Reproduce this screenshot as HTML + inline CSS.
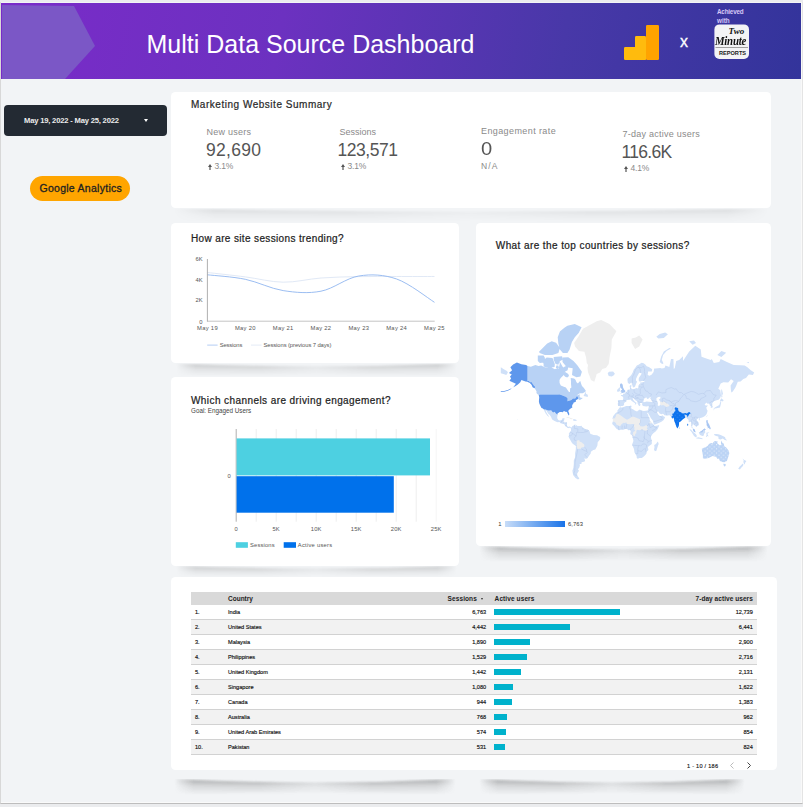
<!DOCTYPE html>
<html><head><meta charset="utf-8">
<style>
*{margin:0;padding:0;box-sizing:border-box}
html,body{width:803px;height:807px;overflow:hidden;background:#ebecee;font-family:"Liberation Sans",sans-serif}
.abs{position:absolute}
#page{position:absolute;left:0;top:2px;width:803px;height:802px;background:#f2f4f6;border-left:1px solid #d8d8d8;border-right:1px solid #e4e4e4;border-bottom:1px solid #bdbdbd;box-shadow:inset 0 -1px 0 #fafafa, inset -1px 0 0 #f9f9f9}
#hdr{position:absolute;left:1px;top:3px;width:800px;height:75.6px;background:linear-gradient(100deg,#7a2bc9 0%,#6c31c0 35%,#4838a8 70%,#33349b 100%);overflow:hidden}
.card{position:absolute;background:#fff;border-radius:4.5px}
.shadow{position:absolute;height:14px;background:linear-gradient(to bottom,rgba(0,0,0,0.10),rgba(0,0,0,0.03) 60%,rgba(0,0,0,0));}
.t{position:absolute;white-space:nowrap;line-height:1}
.lbl{font-size:9px;color:#8a8a8a}
.val{font-size:17.5px;color:#555}
.dlt{font-size:8.5px;color:#8a8a8a;letter-spacing:-0.2px}
.arr{display:inline-block;width:0;height:0;border-left:2px solid transparent;border-right:2px solid transparent;border-bottom:3px solid #555;margin-right:4px;vertical-align:1px}
.ttl{font-size:10px;font-weight:normal;-webkit-text-stroke:0.22px #222;color:#222;letter-spacing:0.15px}
.sm{font-size:5.8px;color:#555}
.sm2{font-size:6.3px;color:#444}
</style></head>
<body>
<div id="page"></div>
<div id="hdr">
  <svg class="abs" style="left:0;top:0" width="800" height="76"><polygon points="1,2 73,3 94,43 64,76 1,76" fill="#7b57c6"/></svg>
  <div class="t" style="left:145.5px;top:29px;font-size:25px;letter-spacing:0;color:#fff">Multi Data Source Dashboard</div>
</div>
<svg class="abs" style="left:0;top:0" width="803" height="80">
  <rect x="624" y="47" width="22" height="13" rx="1.2" fill="#ffbb0d"/>
  <rect x="635" y="36" width="11" height="24" rx="1.2" fill="#ffbb0d"/>
  <rect x="646" y="25" width="13" height="35" rx="1.2" fill="#ffa300"/>
  <rect x="714.4" y="24.4" width="34.6" height="34.6" rx="5" fill="#f3f3f5"/>
  <line x1="715.5" y1="47.5" x2="748" y2="47.5" stroke="#8a8a8a" stroke-width="0.8"/>
</svg>
<div class="t" style="left:680px;top:33.5px;font-size:16px;color:#fff;-webkit-text-stroke:0.3px #fff">x</div>
<div class="t" style="left:717px;top:8.5px;font-size:6.3px;font-weight:bold;color:#d8c8f6;letter-spacing:-0.2px">Achieved</div>
<div class="t" style="left:717px;top:17.5px;font-size:6.3px;font-weight:bold;color:#d8c8f6">with</div>
<div class="t" style="left:728.5px;top:27px;font-size:9px;font-family:'Liberation Serif',serif;font-style:italic;font-weight:bold;color:#111">Two</div>
<div class="t" style="left:715px;top:34px;font-size:13.5px;font-family:'Liberation Serif',serif;font-style:italic;font-weight:bold;color:#111;transform:scaleX(0.8);transform-origin:left top;letter-spacing:-0.3px">Minute</div>
<div class="t" style="left:719px;top:50.6px;font-size:5.6px;font-weight:bold;color:#1a1a1a;letter-spacing:0px">REPORTS</div>

<!-- left controls -->
<div class="abs" style="left:4px;top:105px;width:163px;height:31px;background:#232a33;border-radius:4px"></div>
<div class="t" style="left:24px;top:117px;font-size:7.6px;font-weight:bold;letter-spacing:-0.18px;color:#ececec">May 19, 2022 - May 25, 2022</div>
<div class="abs" style="left:144px;top:119px;width:0;height:0;border-left:2.5px solid transparent;border-right:2.5px solid transparent;border-top:3px solid #fff"></div>
<div class="abs" style="left:30px;top:176px;width:100px;height:25px;background:#ffa500;border-radius:12.5px"></div>
<div class="t" style="left:39.5px;top:183px;font-size:10.5px;font-weight:normal;-webkit-text-stroke:0.3px #222;letter-spacing:0.27px;color:#222">Google Analytics</div>

<!-- cards -->
<!-- shadows -->
<svg class="abs" style="left:0;top:0" width="803" height="807"><defs>
<linearGradient id="sg" x1="0" y1="0" x2="0" y2="1"><stop offset="0" stop-color="#000" stop-opacity="0.2"/><stop offset="0.45" stop-color="#000" stop-opacity="0.07"/><stop offset="1" stop-color="#000" stop-opacity="0"/></linearGradient>
<linearGradient id="sh" x1="0" y1="0" x2="1" y2="0"><stop offset="0" stop-color="#fff" stop-opacity="0"/><stop offset="0.07" stop-color="#fff" stop-opacity="0.9"/><stop offset="0.3" stop-color="#fff" stop-opacity="1"/><stop offset="0.5" stop-color="#fff" stop-opacity="0.45"/><stop offset="0.7" stop-color="#fff" stop-opacity="1"/><stop offset="0.93" stop-color="#fff" stop-opacity="0.9"/><stop offset="1" stop-color="#fff" stop-opacity="0"/></linearGradient>
<mask id="sm" maskContentUnits="objectBoundingBox"><rect x="0" y="0" width="1" height="1" fill="url(#sh)"/></mask>
<filter id="sb" x="-5%" y="-50%" width="110%" height="200%"><feGaussianBlur stdDeviation="1"/></filter>
</defs>
<g mask="url(#sm)" opacity="0.55"><path d="M173.0,208.5 Q471.0,214.8 769.0,208.5 L769.0,222.5 Q471.0,219.0 173.0,222.5 Z" fill="url(#sg)" filter="url(#sb)"/></g>
<g mask="url(#sm)" opacity="1.0"><path d="M176.0,363.5 Q316.5,369.4 457.0,363.5 L457.0,376.5 Q316.5,373.2 176.0,376.5 Z" fill="url(#sg)" filter="url(#sb)"/></g>
<g mask="url(#sm)" opacity="1.0"><path d="M176.0,566.0 Q316.5,571.0 457.0,566.0 L457.0,577.0 Q316.5,574.2 176.0,577.0 Z" fill="url(#sg)" filter="url(#sb)"/></g>
<g mask="url(#sm)" opacity="1.0"><path d="M479.0,546.0 Q623.5,553.2 768.0,546.0 L768.0,562.0 Q623.5,558.0 479.0,562.0 Z" fill="url(#sg)" filter="url(#sb)"/></g>
<g mask="url(#sm)" opacity="1.0"><path d="M174.0,779.0 Q315.0,786.2 456.0,779.0 L456.0,795.0 Q315.0,791.0 174.0,795.0 Z" fill="url(#sg)" filter="url(#sb)"/></g>
<g mask="url(#sm)" opacity="1.0"><path d="M479.0,779.0 Q612.0,786.2 745.0,779.0 L745.0,795.0 Q612.0,791.0 479.0,795.0 Z" fill="url(#sg)" filter="url(#sb)"/></g>
<g mask="url(#sm)" opacity="0.5"><path d="M479.0,546.0 Q623.5,553.2 768.0,546.0 L768.0,562.0 Q623.5,558.0 479.0,562.0 Z" fill="url(#sg)" filter="url(#sb)"/></g>
<g mask="url(#sm)" opacity="0.7"><path d="M174.0,779.0 Q315.0,786.2 456.0,779.0 L456.0,795.0 Q315.0,791.0 174.0,795.0 Z" fill="url(#sg)" filter="url(#sb)"/></g>
<g mask="url(#sm)" opacity="0.7"><path d="M479.0,779.0 Q612.0,786.2 745.0,779.0 L745.0,795.0 Q612.0,791.0 479.0,795.0 Z" fill="url(#sg)" filter="url(#sb)"/></g>
</svg>
<!-- /shadows -->
<div class="card" style="left:171px;top:92px;width:600px;height:116px"></div>
<div class="card" style="left:171px;top:223px;width:288px;height:140px"></div>
<div class="card" style="left:171px;top:377px;width:288px;height:189px"></div>
<div class="card" style="left:476px;top:223px;width:295px;height:323px"></div>
<div class="card" style="left:171px;top:577px;width:606px;height:193px"></div>


<!-- scorecard -->
<div class="t" style="left:191px;top:100px;font-size:10px;font-weight:normal;-webkit-text-stroke:0.22px #2a2a2a;letter-spacing:0.52px;color:#2a2a2a">Marketing Website Summary</div>
<div class="t lbl" style="left:206.5px;top:128px;letter-spacing:0.25px">New users</div>
<div class="t val" style="left:206px;top:141.5px;letter-spacing:0.3px">92,690</div>
<svg class="abs" style="left:207.5px;top:164px" width="4" height="6"><polygon points="0,3 2,0 4,3" fill="#555"/><rect x="1.4" y="2.5" width="1.2" height="3.5" fill="#555"/></svg>
<div class="t dlt" style="left:214.5px;top:162px">3.1%</div>
<div class="t lbl" style="left:339.5px;top:128px">Sessions</div>
<div class="t val" style="left:337.5px;top:141.5px;letter-spacing:-0.45px">123,571</div>
<svg class="abs" style="left:340.5px;top:164px" width="4" height="6"><polygon points="0,3 2,0 4,3" fill="#555"/><rect x="1.4" y="2.5" width="1.2" height="3.5" fill="#555"/></svg>
<div class="t dlt" style="left:347.5px;top:162px">3.1%</div>
<div class="t lbl" style="left:481px;top:127px;letter-spacing:0.4px">Engagement rate</div>
<div class="t val" style="left:480.5px;top:140.5px;transform:scaleX(1.15);transform-origin:left top">0</div>
<div class="t dlt" style="left:481px;top:161.5px;letter-spacing:1.1px">N/A</div>
<div class="t lbl" style="left:622.5px;top:129.5px;letter-spacing:0.25px">7-day active users</div>
<div class="t val" style="left:621.5px;top:143.5px;letter-spacing:-0.7px">116.6K</div>
<svg class="abs" style="left:624px;top:166px" width="4" height="6"><polygon points="0,3 2,0 4,3" fill="#555"/><rect x="1.4" y="2.5" width="1.2" height="3.5" fill="#555"/></svg>
<div class="t dlt" style="left:630.5px;top:164px">4.1%</div>
<!-- charts -->
<svg class="abs" style="left:0;top:0" width="803" height="807">
<path d="M207.50,272.50 C213.81,273.23 232.72,275.28 245.33,276.90 C257.94,278.52 270.55,282.02 283.16,282.20 C295.77,282.38 308.38,278.93 320.99,278.00 C333.60,277.07 346.21,276.85 358.82,276.60 C371.43,276.35 384.04,276.52 396.65,276.50 C409.26,276.48 428.18,276.50 434.48,276.50" fill="none" stroke="#e1e9f6" stroke-width="1"/>
<path d="M207.50,274.80 C213.81,275.55 232.72,276.67 245.33,279.30 C257.94,281.93 270.55,288.62 283.16,290.60 C295.77,292.58 308.38,293.63 320.99,291.20 C333.60,288.77 346.21,278.03 358.82,276.00 C371.43,273.97 384.04,274.62 396.65,279.00 C409.26,283.38 428.18,298.42 434.48,302.30" fill="none" stroke="#90b5ef" stroke-width="0.9"/>
<line x1="207.4" y1="259" x2="207.4" y2="321.5" stroke="#9a9a9a" stroke-width="0.8"/>
<line x1="207" y1="321.2" x2="434.7" y2="321.2" stroke="#b5b5b5" stroke-width="0.8"/>
<line x1="207.2" y1="345.1" x2="217.6" y2="345.1" stroke="#b4cdf4" stroke-width="1"/>
<line x1="251" y1="345.1" x2="261.6" y2="345.1" stroke="#e4ebf6" stroke-width="1"/>
<line x1="236.2" y1="429" x2="236.2" y2="521.7" stroke="#9a9a9a" stroke-width="0.8"/>
<line x1="256.2" y1="429" x2="256.2" y2="521.7" stroke="#e6e6e6" stroke-width="0.7"/>
<line x1="276.2" y1="429" x2="276.2" y2="521.7" stroke="#e6e6e6" stroke-width="0.7"/>
<line x1="296.2" y1="429" x2="296.2" y2="521.7" stroke="#e6e6e6" stroke-width="0.7"/>
<line x1="316.2" y1="429" x2="316.2" y2="521.7" stroke="#e6e6e6" stroke-width="0.7"/>
<line x1="336.2" y1="429" x2="336.2" y2="521.7" stroke="#e6e6e6" stroke-width="0.7"/>
<line x1="356.2" y1="429" x2="356.2" y2="521.7" stroke="#e6e6e6" stroke-width="0.7"/>
<line x1="376.2" y1="429" x2="376.2" y2="521.7" stroke="#e6e6e6" stroke-width="0.7"/>
<line x1="396.2" y1="429" x2="396.2" y2="521.7" stroke="#e6e6e6" stroke-width="0.7"/>
<line x1="416.2" y1="429" x2="416.2" y2="521.7" stroke="#e6e6e6" stroke-width="0.7"/>
<line x1="436.2" y1="429" x2="436.2" y2="521.7" stroke="#f2f2f2" stroke-width="0.7"/>
<rect x="236.6" y="438.4" width="193.4" height="37" fill="#4dd0e1"/>
<rect x="236.6" y="476.2" width="157.2" height="36.5" fill="#0071eb"/>
<rect x="235.8" y="542.2" width="12.1" height="5.6" fill="#4dd0e1"/>
<rect x="283.7" y="542.2" width="12.3" height="5.6" fill="#0071eb"/>
</svg>
<div class="t ttl" style="left:191.00px;top:233.85px;letter-spacing:0.36px">How are site sessions trending?</div>
<div class="t sm" style="right:600.50px;top:257.15px;">6K</div>
<div class="t sm" style="right:600.50px;top:277.85px;">4K</div>
<div class="t sm" style="right:600.50px;top:298.45px;">2K</div>
<div class="t sm" style="right:600.50px;top:319.65px;">0</div>
<div class="t sm" style="left:207.50px;top:326.25px;transform:translateX(-50%);letter-spacing:0.3px">May 19</div>
<div class="t sm" style="left:245.33px;top:326.25px;transform:translateX(-50%);letter-spacing:0.3px">May 20</div>
<div class="t sm" style="left:283.16px;top:326.25px;transform:translateX(-50%);letter-spacing:0.3px">May 21</div>
<div class="t sm" style="left:320.99px;top:326.25px;transform:translateX(-50%);letter-spacing:0.3px">May 22</div>
<div class="t sm" style="left:358.82px;top:326.25px;transform:translateX(-50%);letter-spacing:0.3px">May 23</div>
<div class="t sm" style="left:396.65px;top:326.25px;transform:translateX(-50%);letter-spacing:0.3px">May 24</div>
<div class="t sm" style="left:434.48px;top:326.25px;transform:translateX(-50%);letter-spacing:0.3px">May 25</div>
<div class="t sm" style="left:219.70px;top:343.05px;letter-spacing:-0.12px">Sessions</div>
<div class="t sm" style="left:263.50px;top:343.05px;letter-spacing:-0.07px">Sessions (previous 7 days)</div>
<div class="t ttl" style="left:191.00px;top:396.25px;letter-spacing:0.42px">Which channels are driving engagement?</div>
<div class="t sm2" style="left:191.00px;top:408.48px;">Goal: Engaged Users</div>
<div class="t sm" style="right:572.20px;top:473.85px;">0</div>
<div class="t sm" style="left:236.20px;top:526.85px;transform:translateX(-50%);letter-spacing:0.2px">0</div>
<div class="t sm" style="left:276.20px;top:526.85px;transform:translateX(-50%);letter-spacing:0.2px">5K</div>
<div class="t sm" style="left:316.20px;top:526.85px;transform:translateX(-50%);letter-spacing:0.2px">10K</div>
<div class="t sm" style="left:356.20px;top:526.85px;transform:translateX(-50%);letter-spacing:0.2px">15K</div>
<div class="t sm" style="left:396.20px;top:526.85px;transform:translateX(-50%);letter-spacing:0.2px">20K</div>
<div class="t sm" style="left:436.20px;top:526.85px;transform:translateX(-50%);letter-spacing:0.2px">25K</div>
<div class="t sm" style="left:250.00px;top:542.85px;letter-spacing:0.15px">Sessions</div>
<div class="t sm" style="left:297.80px;top:542.85px;letter-spacing:0.25px">Active users</div>
<div class="t ttl" style="left:495.80px;top:241.05px;letter-spacing:0.41px">What are the top countries by sessions?</div>
<div class="t sm" style="right:301.50px;top:521.55px;color:#333">1</div>
<div class="t sm" style="left:568.00px;top:521.55px;color:#333;letter-spacing:0.1px">6,763</div>
<div class="abs" style="left:505px;top:521.2px;width:60px;height:6.3px;background:linear-gradient(to right,#c8ddf8,#1a73e8)"></div>
<!-- /charts -->
<!-- table -->
<div class="abs" style="left:191px;top:592.1px;width:566px;height:12.7px;background:#d9d9d9"></div>
<div class="t" style="left:228.00px;top:596.15px;font-size:6.5px;font-weight:bold;color:#222">Country</div>
<div class="t" style="right:326.10px;top:596.15px;font-size:6.5px;font-weight:bold;color:#222;letter-spacing:0.1px">Sessions</div>
<div class="abs" style="left:480.8px;top:597.8px;width:0;height:0;border-left:1.7px solid transparent;border-right:1.7px solid transparent;border-top:2.2px solid #333"></div>
<div class="t" style="left:494.60px;top:596.15px;font-size:6.5px;font-weight:bold;color:#222;letter-spacing:0.1px">Active users</div>
<div class="t" style="right:50.20px;top:596.15px;font-size:6.5px;font-weight:bold;color:#222;letter-spacing:0.05px">7-day active users</div>
<div class="abs" style="left:191px;top:604.8px;width:566px;height:15px;background:#fff;border-bottom:1px solid #d2d2d2"></div>
<div class="t" style="left:195.00px;top:609.97px;font-size:5.6px;color:#111;-webkit-text-stroke:0.15px #111">1.</div>
<div class="t" style="left:228.00px;top:609.97px;font-size:5.6px;color:#111;-webkit-text-stroke:0.15px #111">India</div>
<div class="t" style="right:316.80px;top:609.97px;font-size:5.6px;color:#111;-webkit-text-stroke:0.15px #111">6,763</div>
<div class="abs" style="left:494px;top:609.2px;width:125.8px;height:5.6px;background:#00b2cc"></div>
<div class="t" style="right:50.20px;top:609.97px;font-size:5.6px;color:#111;-webkit-text-stroke:0.15px #111">12,739</div>
<div class="abs" style="left:191px;top:619.8px;width:566px;height:15px;background:#f2f2f2;border-bottom:1px solid #d2d2d2"></div>
<div class="t" style="left:195.00px;top:624.97px;font-size:5.6px;color:#111;-webkit-text-stroke:0.15px #111">2.</div>
<div class="t" style="left:228.00px;top:624.97px;font-size:5.6px;color:#111;-webkit-text-stroke:0.15px #111">United States</div>
<div class="t" style="right:316.80px;top:624.97px;font-size:5.6px;color:#111;-webkit-text-stroke:0.15px #111">4,442</div>
<div class="abs" style="left:494px;top:624.2px;width:76.0px;height:5.6px;background:#00b2cc"></div>
<div class="t" style="right:50.20px;top:624.97px;font-size:5.6px;color:#111;-webkit-text-stroke:0.15px #111">6,441</div>
<div class="abs" style="left:191px;top:634.8px;width:566px;height:15px;background:#fff;border-bottom:1px solid #d2d2d2"></div>
<div class="t" style="left:195.00px;top:639.97px;font-size:5.6px;color:#111;-webkit-text-stroke:0.15px #111">3.</div>
<div class="t" style="left:228.00px;top:639.97px;font-size:5.6px;color:#111;-webkit-text-stroke:0.15px #111">Malaysia</div>
<div class="t" style="right:316.80px;top:639.97px;font-size:5.6px;color:#111;-webkit-text-stroke:0.15px #111">1,890</div>
<div class="abs" style="left:494px;top:639.2px;width:35.8px;height:5.6px;background:#00b2cc"></div>
<div class="t" style="right:50.20px;top:639.97px;font-size:5.6px;color:#111;-webkit-text-stroke:0.15px #111">2,900</div>
<div class="abs" style="left:191px;top:649.8px;width:566px;height:15px;background:#f2f2f2;border-bottom:1px solid #d2d2d2"></div>
<div class="t" style="left:195.00px;top:654.97px;font-size:5.6px;color:#111;-webkit-text-stroke:0.15px #111">4.</div>
<div class="t" style="left:228.00px;top:654.97px;font-size:5.6px;color:#111;-webkit-text-stroke:0.15px #111">Philippines</div>
<div class="t" style="right:316.80px;top:654.97px;font-size:5.6px;color:#111;-webkit-text-stroke:0.15px #111">1,529</div>
<div class="abs" style="left:494px;top:654.2px;width:32.7px;height:5.6px;background:#00b2cc"></div>
<div class="t" style="right:50.20px;top:654.97px;font-size:5.6px;color:#111;-webkit-text-stroke:0.15px #111">2,716</div>
<div class="abs" style="left:191px;top:664.8px;width:566px;height:15px;background:#fff;border-bottom:1px solid #d2d2d2"></div>
<div class="t" style="left:195.00px;top:669.97px;font-size:5.6px;color:#111;-webkit-text-stroke:0.15px #111">5.</div>
<div class="t" style="left:228.00px;top:669.97px;font-size:5.6px;color:#111;-webkit-text-stroke:0.15px #111">United Kingdom</div>
<div class="t" style="right:316.80px;top:669.97px;font-size:5.6px;color:#111;-webkit-text-stroke:0.15px #111">1,442</div>
<div class="abs" style="left:494px;top:669.2px;width:26.9px;height:5.6px;background:#00b2cc"></div>
<div class="t" style="right:50.20px;top:669.97px;font-size:5.6px;color:#111;-webkit-text-stroke:0.15px #111">2,131</div>
<div class="abs" style="left:191px;top:679.8px;width:566px;height:15px;background:#f2f2f2;border-bottom:1px solid #d2d2d2"></div>
<div class="t" style="left:195.00px;top:684.97px;font-size:5.6px;color:#111;-webkit-text-stroke:0.15px #111">6.</div>
<div class="t" style="left:228.00px;top:684.97px;font-size:5.6px;color:#111;-webkit-text-stroke:0.15px #111">Singapore</div>
<div class="t" style="right:316.80px;top:684.97px;font-size:5.6px;color:#111;-webkit-text-stroke:0.15px #111">1,080</div>
<div class="abs" style="left:494px;top:684.2px;width:19.0px;height:5.6px;background:#00b2cc"></div>
<div class="t" style="right:50.20px;top:684.97px;font-size:5.6px;color:#111;-webkit-text-stroke:0.15px #111">1,622</div>
<div class="abs" style="left:191px;top:694.8px;width:566px;height:15px;background:#fff;border-bottom:1px solid #d2d2d2"></div>
<div class="t" style="left:195.00px;top:699.97px;font-size:5.6px;color:#111;-webkit-text-stroke:0.15px #111">7.</div>
<div class="t" style="left:228.00px;top:699.97px;font-size:5.6px;color:#111;-webkit-text-stroke:0.15px #111">Canada</div>
<div class="t" style="right:316.80px;top:699.97px;font-size:5.6px;color:#111;-webkit-text-stroke:0.15px #111">944</div>
<div class="abs" style="left:494px;top:699.2px;width:17.8px;height:5.6px;background:#00b2cc"></div>
<div class="t" style="right:50.20px;top:699.97px;font-size:5.6px;color:#111;-webkit-text-stroke:0.15px #111">1,383</div>
<div class="abs" style="left:191px;top:709.8px;width:566px;height:15px;background:#f2f2f2;border-bottom:1px solid #d2d2d2"></div>
<div class="t" style="left:195.00px;top:714.97px;font-size:5.6px;color:#111;-webkit-text-stroke:0.15px #111">8.</div>
<div class="t" style="left:228.00px;top:714.97px;font-size:5.6px;color:#111;-webkit-text-stroke:0.15px #111">Australia</div>
<div class="t" style="right:316.80px;top:714.97px;font-size:5.6px;color:#111;-webkit-text-stroke:0.15px #111">768</div>
<div class="abs" style="left:494px;top:714.2px;width:13.0px;height:5.6px;background:#00b2cc"></div>
<div class="t" style="right:50.20px;top:714.97px;font-size:5.6px;color:#111;-webkit-text-stroke:0.15px #111">962</div>
<div class="abs" style="left:191px;top:724.8px;width:566px;height:15px;background:#fff;border-bottom:1px solid #d2d2d2"></div>
<div class="t" style="left:195.00px;top:729.97px;font-size:5.6px;color:#111;-webkit-text-stroke:0.15px #111">9.</div>
<div class="t" style="left:228.00px;top:729.97px;font-size:5.6px;color:#111;-webkit-text-stroke:0.15px #111">United Arab Emirates</div>
<div class="t" style="right:316.80px;top:729.97px;font-size:5.6px;color:#111;-webkit-text-stroke:0.15px #111">574</div>
<div class="abs" style="left:494px;top:729.2px;width:12.1px;height:5.6px;background:#00b2cc"></div>
<div class="t" style="right:50.20px;top:729.97px;font-size:5.6px;color:#111;-webkit-text-stroke:0.15px #111">854</div>
<div class="abs" style="left:191px;top:739.8px;width:566px;height:15px;background:#f2f2f2;border-bottom:1px solid #d2d2d2"></div>
<div class="t" style="left:195.00px;top:744.97px;font-size:5.6px;color:#111;-webkit-text-stroke:0.15px #111">10.</div>
<div class="t" style="left:228.00px;top:744.97px;font-size:5.6px;color:#111;-webkit-text-stroke:0.15px #111">Pakistan</div>
<div class="t" style="right:316.80px;top:744.97px;font-size:5.6px;color:#111;-webkit-text-stroke:0.15px #111">531</div>
<div class="abs" style="left:494px;top:744.2px;width:11.0px;height:5.6px;background:#00b2cc"></div>
<div class="t" style="right:50.20px;top:744.97px;font-size:5.6px;color:#111;-webkit-text-stroke:0.15px #111">824</div>
<div class="t" style="right:84.70px;top:763.77px;font-size:5.6px;color:#222;-webkit-text-stroke:0.15px #222;letter-spacing:0.25px">1 - 10 / 186</div>
<svg class="abs" style="left:728px;top:761px" width="26" height="10"><polyline points="5.5,1.5 2.5,4.5 5.5,7.5" fill="none" stroke="#bbb" stroke-width="1"/><polyline points="19.5,1.5 22.5,4.5 19.5,7.5" fill="none" stroke="#444" stroke-width="1"/></svg>
<!-- /table -->
<!-- map -->
<svg class="abs" style="left:0;top:0" width="803" height="807"><defs><pattern id="dots" x="0.3" y="0.6" width="4.6" height="4.2" patternUnits="userSpaceOnUse"><circle cx="1" cy="1" r="0.5" fill="#fff" fill-opacity="0.8"/><circle cx="3.3" cy="3.1" r="0.5" fill="#fff" fill-opacity="0.8"/></pattern></defs>
<path d="M620.3,406.7 L619.6,406.0 L618.0,405.9 L618.1,404.4 L617.6,404.3 L618.1,402.4 L617.8,400.5 L618.6,399.9 L621.7,400.0 L623.1,400.1 L623.3,397.8 L622.6,396.4 L621.0,395.7 L620.9,395.1 L623.0,394.9 L623.2,393.8 L625.1,393.5 L625.3,392.5 L626.5,391.9 L627.3,390.3 L628.2,389.7 L629.9,389.5 L630.0,387.9 L629.6,385.9 L631.3,384.6 L631.3,386.6 L630.6,387.9 L631.6,389.1 L633.7,389.2 L636.4,388.1 L637.8,388.5 L638.6,386.7 L638.5,385.2 L639.5,384.6 L640.7,385.2 L640.2,383.5 L640.2,382.5 L643.3,382.2 L644.8,381.6 L644.0,381.0 L641.9,381.0 L639.8,381.8 L638.7,380.5 L638.8,377.9 L641.2,374.4 L641.6,373.3 L639.2,372.8 L637.1,376.4 L636.1,378.7 L635.9,380.5 L637.1,381.8 L636.4,382.9 L635.4,385.4 L635.1,386.4 L633.8,387.4 L632.9,387.1 L631.6,383.0 L631.3,382.5 L630.7,383.0 L629.6,384.0 L627.9,383.0 L627.5,380.8 L627.5,378.7 L629.9,376.4 L631.3,374.9 L632.7,372.4 L633.7,369.8 L635.1,368.0 L636.8,365.5 L638.5,364.7 L641.6,362.8 L643.6,363.2 L645.3,364.5 L646.7,366.3 L648.8,367.0 L652.2,369.3 L651.8,371.6 L648.1,371.6 L647.7,374.9 L649.4,375.8 L651.5,374.7 L653.6,371.9 L654.2,368.4 L655.6,368.5 L660.4,368.0 L661.8,368.4 L664.5,368.0 L665.5,365.5 L669.3,367.0 L671.0,359.1 L673.4,359.1 L673.8,368.9 L674.8,368.0 L676.2,360.9 L679.2,360.0 L683.0,356.2 L683.0,360.9 L689.2,351.4 L695.3,345.8 L700.8,349.4 L701.5,356.7 L706.3,358.6 L710.8,360.0 L711.8,359.1 L713.8,363.0 L719.3,362.0 L720.7,359.1 L726.9,362.0 L733.7,365.1 L740.6,365.3 L744.7,365.5 L747.4,367.2 L750.8,370.3 L754.2,372.4 L752.9,374.9 L748.8,374.4 L746.0,377.9 L743.3,379.0 L740.6,381.5 L737.8,381.8 L736.1,386.1 L735.1,388.1 L732.8,391.4 L731.3,392.5 L730.8,389.1 L730.6,385.4 L733.7,381.1 L731.0,379.3 L728.2,382.6 L723.4,382.3 L720.7,383.4 L718.3,388.7 L720.3,390.2 L721.0,395.6 L720.2,398.1 L718.6,399.8 L716.6,400.2 L715.2,400.7 L713.6,401.2 L712.7,402.8 L711.8,404.4 L712.8,406.7 L712.5,407.5 L710.8,408.1 L710.8,405.9 L709.7,405.3 L709.4,403.4 L707.3,403.7 L707.0,402.5 L704.9,404.0 L704.7,404.6 L705.6,405.6 L708.0,405.6 L706.3,407.6 L706.8,409.6 L707.6,410.8 L707.0,413.1 L706.0,415.1 L704.2,416.6 L702.2,417.5 L700.1,418.1 L699.5,419.0 L698.4,418.0 L697.1,419.2 L696.4,420.3 L698.6,422.5 L699.0,424.9 L697.3,426.0 L695.9,427.3 L696.0,426.3 L694.7,425.6 L692.9,423.9 L692.1,426.3 L692.8,428.2 L693.5,431.3 L695.0,432.3 L695.5,432.2 L694.9,430.1 L694.1,428.9 L692.9,428.5 L691.6,427.7 L691.4,426.3 L691.6,424.2 L691.0,421.7 L689.4,422.2 L688.7,421.9 L688.6,420.1 L687.4,418.7 L687.0,417.4 L686.1,417.7 L685.1,417.9 L684.7,418.0 L683.6,418.8 L682.3,419.7 L680.5,421.4 L679.1,422.2 L679.0,424.2 L678.8,426.1 L677.2,427.6 L676.4,426.7 L675.8,425.1 L675.2,423.2 L674.3,421.0 L674.0,419.6 L673.8,418.3 L673.8,417.6 L672.4,418.6 L671.4,417.5 L672.1,417.0 L671.0,416.6 L670.0,415.7 L669.7,415.2 L666.9,415.4 L664.5,415.2 L663.4,414.1 L662.7,413.8 L661.4,414.2 L659.7,413.4 L658.9,412.5 L658.4,411.5 L657.3,411.6 L657.0,412.2 L658.0,414.0 L658.7,415.1 L659.4,415.4 L659.4,416.0 L661.4,416.1 L662.7,414.9 L662.7,415.9 L664.2,416.6 L665.1,417.4 L664.2,418.9 L663.7,419.9 L661.8,421.4 L659.9,422.4 L657.5,423.5 L654.9,424.4 L653.9,424.4 L653.3,422.4 L653.1,421.0 L650.8,418.1 L649.8,415.9 L648.2,413.2 L648.0,412.0 L647.6,410.6 L648.1,409.4 L648.7,407.2 L648.8,406.1 L646.4,406.6 L644.6,406.3 L642.9,405.9 L642.1,404.6 L642.3,403.0 L639.9,403.0 L640.5,405.0 L639.5,406.3 L638.5,405.2 L637.5,403.3 L637.5,401.6 L635.1,400.0 L633.5,398.0 L632.5,398.3 L633.3,399.9 L635.1,401.9 L636.8,403.1 L635.7,404.1 L635.1,405.0 L634.8,404.8 L635.1,403.3 L634.0,402.6 L632.5,401.6 L631.3,400.6 L630.1,399.2 L629.2,399.8 L627.2,400.1 L626.2,400.5 L626.3,401.5 L624.6,402.5 L623.9,403.8 L624.2,404.4 L623.6,405.4 L622.6,406.1 L621.0,406.1 L620.3,406.7Z M620.1,406.9 L617.4,410.5 L617.5,411.7 L615.2,413.4 L613.1,416.3 L612.5,418.5 L613.0,419.6 L612.8,422.1 L612.1,423.0 L612.6,424.6 L613.8,425.6 L614.9,426.7 L616.2,428.4 L619.0,430.2 L621.4,429.6 L623.4,429.8 L625.1,428.9 L627.2,428.9 L628.2,430.3 L629.9,430.1 L630.7,431.1 L630.5,432.5 L630.3,434.1 L632.2,435.6 L632.5,437.3 L633.1,439.2 L633.4,441.1 L632.2,444.2 L632.2,445.0 L634.0,449.0 L634.5,452.4 L635.4,453.7 L636.6,456.0 L636.8,458.0 L637.8,458.7 L639.5,458.0 L641.6,458.0 L642.9,457.3 L644.6,455.8 L646.4,453.7 L646.6,451.7 L648.4,450.1 L648.2,448.7 L647.9,447.0 L649.1,446.1 L651.8,444.0 L651.8,440.4 L651.0,438.0 L651.0,436.4 L652.2,434.6 L653.6,433.0 L655.6,431.5 L657.7,429.1 L659.0,426.0 L659.2,425.1 L657.7,425.4 L654.6,426.0 L653.8,425.2 L653.2,424.2 L650.8,422.1 L649.7,420.1 L649.6,418.5 L648.5,416.4 L648.1,414.7 L647.1,413.4 L646.4,411.6 L646.2,412.0 L647.5,413.4 L648.0,412.0 L647.5,410.6 L646.0,410.8 L644.0,410.9 L641.2,410.4 L639.9,409.6 L637.8,410.8 L637.1,411.4 L634.7,410.4 L633.0,409.3 L632.0,409.1 L631.1,408.0 L631.6,405.9 L630.8,405.6 L629.9,406.0 L626.2,406.1 L623.1,407.3 L622.7,407.5 L620.7,407.4 L620.1,406.9Z M543.9,409.6 L545.5,409.6 L548.1,410.6 L550.0,410.6 L551.1,410.2 L552.5,411.9 L553.5,412.4 L554.6,411.8 L555.9,413.6 L557.5,414.8 L557.2,417.7 L557.5,418.8 L558.3,419.9 L559.4,420.5 L561.1,420.2 L562.1,419.4 L562.2,418.5 L564.5,418.1 L564.2,420.3 L563.6,421.0 L563.0,420.8 L561.8,420.8 L560.9,423.2 L559.4,422.0 L557.7,422.2 L556.3,421.7 L554.6,421.0 L552.2,419.4 L551.8,418.7 L551.1,417.0 L549.8,415.1 L548.1,413.4 L546.8,411.2 L545.5,410.2 L545.8,411.2 L547.0,413.6 L548.8,416.3 L549.1,417.0 L547.4,415.7 L545.7,413.6 L544.6,411.4 L543.9,409.6Z M560.9,423.2 L561.8,420.8 L563.0,420.8 L563.6,421.0 L563.5,422.2 L566.6,422.2 L567.1,422.8 L566.9,425.6 L567.9,427.0 L569.6,426.6 L571.1,427.2 L570.7,428.3 L570.0,427.5 L569.0,428.3 L567.2,427.5 L565.4,426.3 L564.2,424.2 L562.5,423.7 L560.9,423.2Z M570.7,428.3 L572.0,426.7 L572.4,426.0 L573.8,425.4 L575.1,424.6 L575.1,426.0 L576.1,424.9 L577.5,426.0 L580.3,425.9 L581.6,425.8 L582.3,427.4 L583.3,427.7 L585.1,429.1 L587.1,429.4 L588.8,430.3 L589.9,432.0 L589.9,433.2 L590.9,434.0 L593.6,434.9 L597.0,435.3 L600.1,437.0 L600.3,438.1 L599.8,439.7 L597.7,442.2 L597.4,445.5 L596.4,447.6 L595.3,449.4 L593.3,450.0 L590.9,451.7 L590.7,453.6 L589.2,455.6 L587.5,458.0 L586.4,458.8 L584.0,458.4 L585.1,460.1 L584.7,461.6 L581.6,462.3 L581.4,463.9 L579.6,464.0 L579.9,465.4 L579.2,467.8 L577.9,469.3 L579.0,470.8 L577.2,473.4 L577.2,475.4 L579.4,478.4 L578.0,479.6 L575.5,477.9 L573.1,475.0 L572.4,470.8 L573.4,467.8 L573.8,464.0 L573.8,460.5 L575.1,457.2 L575.1,453.2 L575.8,449.4 L575.9,446.0 L572.7,443.8 L571.7,442.5 L570.3,440.1 L569.0,437.7 L568.4,436.3 L569.3,434.9 L568.7,433.9 L569.3,432.7 L570.1,432.0 L571.0,430.6 L571.0,428.7 L570.7,428.3Z M573.1,419.3 L574.8,419.3 L577.3,420.2 L575.1,420.9 L573.1,420.4 L573.1,419.3Z M620.0,391.1 L619.9,389.1 L620.3,387.7 L619.1,387.5 L618.3,388.7 L617.2,389.7 L617.0,391.6 L618.6,391.8 L620.0,391.1Z M713.7,410.8 L714.5,408.6 L716.6,408.2 L717.8,408.0 L720.0,407.4 L720.7,404.8 L721.2,402.1 L720.0,402.2 L719.9,403.3 L719.3,405.0 L717.6,405.9 L715.2,407.2 L713.7,408.4 L713.7,410.8Z M720.0,402.0 L721.0,401.0 L722.4,401.4 L723.8,400.2 L721.2,398.2 L719.9,401.0 L720.0,402.0Z M721.4,397.6 L722.4,397.1 L722.1,394.6 L723.1,394.6 L721.8,388.7 L721.2,390.8 L721.4,397.6Z M706.4,417.3 L707.6,415.5 L707.3,415.3 L706.4,416.6 L706.4,417.3Z M698.6,419.8 L699.8,419.1 L700.1,419.5 L699.2,420.5 L698.6,419.8Z M689.4,429.4 L690.9,429.6 L692.9,431.7 L695.7,433.9 L696.7,435.3 L696.6,437.2 L695.7,437.2 L694.0,435.9 L692.8,433.9 L691.6,432.0 L689.4,429.4Z M696.2,437.9 L698.3,437.3 L701.2,437.9 L702.6,438.5 L702.5,439.2 L699.5,438.8 L696.4,438.4 L696.2,437.9Z M698.8,432.2 L699.8,432.0 L701.5,431.0 L703.2,429.4 L704.5,428.4 L705.8,429.6 L704.9,430.3 L705.3,432.5 L704.6,432.9 L703.9,434.6 L703.6,435.8 L702.5,435.9 L700.5,435.3 L699.5,434.2 L698.8,432.2Z M706.0,437.0 L706.6,434.9 L706.3,432.7 L709.6,432.2 L707.3,433.8 L708.6,436.4 L707.3,435.9 L706.6,437.0 L706.0,437.0Z M713.8,434.2 L715.9,433.9 L718.3,434.2 L720.7,435.0 L723.9,436.4 L725.1,437.3 L725.5,438.7 L727.2,440.4 L724.8,440.1 L722.7,438.4 L720.7,439.5 L718.6,438.9 L718.3,436.6 L716.2,435.9 L714.5,435.2 L713.8,434.2Z M742.4,458.4 L744.3,460.1 L746.4,461.1 L745.3,462.5 L744.7,464.3 L743.7,464.3 L744.0,462.7 L743.2,462.4 L743.7,460.5 L742.4,458.4Z M742.4,463.6 L743.5,464.7 L742.5,466.5 L741.2,467.8 L739.9,469.4 L738.2,468.8 L739.5,466.8 L741.6,464.8 L742.4,463.6Z M657.9,441.5 L658.7,444.0 L658.0,445.4 L656.4,450.7 L654.9,451.3 L654.0,449.4 L654.5,447.2 L654.2,445.0 L656.0,444.1 L657.0,442.5 L657.9,441.5Z M659.7,362.0 L662.1,363.9 L663.5,363.5 L661.8,359.7 L663.1,354.9 L666.6,350.9 L671.0,348.5 L669.3,347.9 L663.8,351.4 L661.1,356.7 L659.7,362.0Z M689.2,341.3 L694.0,340.6 L696.0,343.1 L692.6,344.8 L689.2,341.3Z M717.3,354.9 L721.4,356.9 L726.2,352.8 L721.4,350.9 L717.3,354.9Z M746.4,362.6 L749.1,363.2 L748.8,362.0 L746.4,362.6Z M678.8,426.5 L680.2,428.0 L679.8,428.9 L678.9,429.1 L678.8,426.5Z M583.5,396.0 L585.7,391.8 L586.2,394.1 L587.5,394.6 L588.0,396.1 L587.5,396.9 L585.9,396.6 L583.5,396.0Z M656.3,336.8 L659.7,333.9 L665.2,332.5 L667.9,334.3 L663.8,338.0 L658.4,338.4 L656.3,336.8Z M517.2,419.2 L517.9,419.6 L517.6,419.9 L517.2,419.2Z M607.7,373.3 L609.0,371.7 L613.1,371.6 L614.9,373.7 L613.8,375.2 L611.8,376.6 L608.7,376.0 L607.7,373.3Z M500.8,367.2 L504.2,369.6 L507.0,371.1 L507.9,372.4 L506.3,374.9 L503.5,374.1 L500.8,373.3 L500.8,367.2Z M506.4,376.0 L508.5,376.9 L507.7,376.6 L506.4,376.0Z" fill="#cfe0f8"/>
<path d="M527.5,365.9 L530.9,366.7 L532.7,365.9 L535.4,364.9 L538.5,366.1 L541.2,365.5 L544.0,367.0 L547.4,368.0 L551.5,367.4 L554.9,369.3 L557.7,368.0 L558.7,368.7 L559.7,364.1 L559.4,360.9 L561.1,364.1 L563.1,367.6 L565.9,365.9 L568.3,366.7 L567.6,370.2 L565.2,371.6 L564.2,374.4 L562.0,376.7 L560.7,377.9 L559.5,380.1 L559.6,383.1 L560.8,385.4 L563.8,386.7 L565.9,387.5 L567.7,390.3 L569.0,392.1 L570.0,391.9 L570.1,388.5 L571.4,387.5 L571.0,383.9 L571.0,381.5 L570.7,378.1 L574.1,378.4 L575.5,379.8 L576.5,382.2 L577.9,383.5 L579.6,381.5 L580.3,381.1 L581.3,384.2 L582.0,386.1 L583.7,387.7 L584.8,389.3 L585.9,391.0 L584.9,392.0 L582.7,393.3 L579.9,393.3 L578.2,394.3 L576.5,395.8 L579.2,394.4 L580.1,394.7 L579.6,395.6 L579.7,396.8 L580.3,397.6 L582.3,398.0 L582.9,397.4 L582.3,398.5 L579.9,399.9 L578.9,399.8 L578.2,398.8 L577.7,396.5 L576.7,396.2 L575.7,398.1 L575.1,398.6 L572.9,398.6 L571.5,399.9 L569.8,400.6 L567.2,401.2 L567.6,400.5 L567.6,398.3 L566.2,397.1 L562.7,395.6 L558.9,394.2 L558.9,394.6 L539.8,394.6 L539.5,395.0 L538.1,394.7 L536.4,393.0 L536.6,391.4 L535.0,388.8 L534.7,388.3 L532.7,387.3 L531.6,384.8 L529.9,383.1 L527.5,381.8 L527.5,381.1Z M562.5,357.6 L568.3,357.2 L573.5,360.9 L577.3,365.3 L581.9,371.7 L580.4,376.4 L576.5,377.2 L572.0,375.0 L572.7,368.2 L566.8,367.2 L562.5,362.0 L562.5,357.6Z M563.8,375.3 L565.2,372.1 L568.3,374.1 L569.0,376.0 L567.2,377.5 L565.2,376.7 L563.8,375.3Z M543.6,364.1 L542.6,360.9 L546.7,357.6 L552.5,357.9 L554.8,364.1 L554.6,367.0 L548.1,368.0 L543.6,366.5 L543.6,364.1Z M537.8,355.4 L543.6,355.4 L545.0,358.1 L544.0,362.6 L539.8,363.0 L537.8,360.9 L537.8,355.4Z M567.4,325.7 L574.8,324.1 L581.6,327.3 L578.6,333.0 L574.8,337.2 L571.9,342.1 L569.6,349.4 L567.4,353.1 L562.9,353.1 L559.9,349.4 L558.4,343.8 L557.7,337.2 L559.9,331.6 L564.4,327.8 L567.4,325.7Z M561.1,354.7 L561.1,354.7 L561.1,354.7Z M539.0,351.7 L547.2,343.4 L551.7,341.3 L556.1,342.8 L559.9,347.9 L558.4,353.1 L552.4,354.9 L544.9,354.9 L539.7,353.1 L539.0,351.7Z M558.3,344.8 L558.3,344.8 L558.3,344.8Z M553.7,356.9 L562.1,356.2 L562.5,359.7 L559.7,361.3 L558.3,364.7 L555.6,364.1 L553.7,359.7 L553.7,356.9Z M554.9,360.9 L554.9,360.9 L554.9,360.9Z M544.6,354.9 L544.6,354.9 L544.6,354.9Z M555.9,368.0 L559.0,368.0 L558.3,365.5 L556.3,365.5 L555.9,368.0Z" fill="#b8d2f5"/>
<path d="M643.3,401.9 L643.6,400.0 L644.6,398.1 L646.7,397.6 L647.0,399.1 L648.8,398.4 L650.5,396.6 L650.8,397.1 L650.1,398.3 L650.8,399.1 L652.5,401.9 L648.8,401.7 L646.7,401.4 L644.0,402.2 L643.3,401.9Z M656.3,398.6 L658.0,397.1 L660.4,396.8 L660.4,398.6 L659.0,399.3 L660.3,401.9 L661.0,402.8 L660.7,404.6 L659.0,406.1 L657.7,405.5 L658.0,403.0 L656.6,400.5 L656.3,398.6Z" fill="#ffffff"/>
<path d="M631.6,343.1 L635.1,349.1 L639.2,346.4 L642.6,339.5 L639.2,335.6 L635.7,337.6 L631.6,338.4 L631.6,343.1Z M574.1,343.1 L578.5,336.4 L583.0,328.8 L596.7,321.2 L601.2,320.0 L609.4,324.1 L616.4,331.2 L611.8,339.5 L611.4,347.9 L609.7,356.2 L608.7,364.1 L605.9,368.0 L602.2,368.9 L600.1,372.4 L596.7,374.1 L595.3,378.7 L594.3,381.8 L590.9,380.1 L589.5,375.7 L588.1,372.4 L587.5,368.0 L588.1,365.1 L586.8,363.0 L586.1,357.4 L584.4,351.7 L578.9,350.9 L575.1,346.4 L574.1,343.1Z M576.5,440.7 L579.3,439.9 L579.6,441.5 L582.0,442.5 L582.9,443.6 L584.2,444.5 L584.4,447.0 L581.4,447.6 L581.2,448.8 L578.9,448.7 L577.7,449.2 L577.0,447.6 L576.5,445.4 L576.9,443.1 L576.5,440.7Z M612.5,418.5 L615.2,418.3 L615.2,417.0 L615.9,416.6 L615.9,414.7 L618.1,413.7 L620.8,415.5 L624.9,418.5 L627.0,419.8 L627.0,421.5 L626.5,422.4 L624.2,422.9 L623.8,422.7 L622.7,423.2 L621.0,424.7 L620.4,426.1 L618.8,426.1 L618.4,425.3 L616.4,424.8 L615.9,423.0 L614.2,421.7 L613.0,421.7 L613.0,419.6 L612.5,418.5Z M627.0,419.8 L629.9,418.3 L632.3,416.6 L634.4,417.0 L640.5,419.6 L640.5,422.3 L639.5,423.5 L639.4,424.7 L639.0,425.8 L637.1,427.0 L634.7,428.0 L633.8,426.5 L634.0,424.4 L633.3,423.9 L632.3,424.0 L630.1,424.3 L626.8,423.9 L626.5,422.4 L627.0,421.5 L627.0,419.8Z M634.0,428.9 L634.7,428.0 L637.1,427.0 L639.0,425.8 L639.4,424.7 L640.5,426.3 L642.6,426.6 L644.6,426.1 L646.7,424.8 L647.4,426.3 L647.6,427.4 L646.8,427.7 L647.0,428.9 L648.3,429.6 L647.3,430.3 L645.0,430.7 L642.9,429.8 L641.2,429.8 L639.5,430.3 L637.5,429.7 L636.2,430.7 L635.4,430.8 L634.7,430.1 L634.0,428.9Z M631.8,435.9 L632.2,435.6 L633.1,434.8 L634.0,436.3 L635.1,435.4 L635.2,433.9 L636.3,433.2 L636.4,430.7 L635.4,430.8 L633.7,431.7 L633.1,432.3 L633.2,433.5 L632.5,434.7 L631.8,435.9Z M649.1,423.3 L650.5,421.0 L651.2,422.4 L652.7,424.0 L653.6,424.4 L651.5,423.2 L649.8,423.4 L649.1,423.3Z M660.1,401.6 L662.1,402.1 L663.8,400.9 L665.5,402.2 L666.8,403.3 L668.3,404.3 L669.7,405.6 L668.3,406.6 L666.0,407.1 L665.5,406.3 L663.1,405.0 L661.0,405.6 L660.3,403.7 L660.1,401.6Z M565.9,417.8 L567.9,416.9 L571.0,417.9 L573.3,419.1 L570.9,419.3 L569.0,418.1 L565.9,417.8Z" fill="#eeeeee"/>
<path d="M538.7,395.2 L539.8,394.6 L558.9,394.6 L558.9,394.2 L562.7,395.6 L566.2,397.1 L567.6,398.3 L567.6,400.5 L567.2,401.2 L569.8,400.6 L571.5,399.9 L572.9,398.6 L575.1,398.6 L575.7,398.1 L576.7,396.2 L577.7,396.5 L578.2,398.8 L577.2,399.4 L576.1,399.9 L575.7,400.9 L576.1,401.6 L575.1,402.1 L573.4,402.7 L573.3,403.7 L572.7,404.2 L572.4,405.0 L572.0,405.9 L572.4,407.4 L571.4,408.0 L570.0,409.1 L568.6,410.3 L568.3,411.6 L569.0,412.8 L569.3,414.4 L568.8,415.4 L568.1,414.4 L567.5,413.2 L566.9,411.7 L565.9,411.9 L564.8,411.3 L563.5,411.3 L562.8,412.3 L561.4,412.1 L559.7,412.0 L559.0,412.4 L557.5,413.5 L557.5,414.8 L555.9,413.6 L554.6,411.8 L553.5,412.4 L552.5,411.9 L551.1,410.2 L550.0,410.6 L548.1,410.6 L545.5,409.6 L543.9,409.6 L542.9,408.4 L541.5,407.9 L540.3,405.7 L539.3,403.4 L538.9,401.4 L539.2,397.3 L538.7,395.2Z M527.5,365.9 L526.1,364.9 L521.4,364.3 L516.9,362.4 L513.1,364.5 L510.4,367.2 L512.1,370.3 L509.0,373.1 L511.8,374.6 L510.0,376.4 L511.1,378.4 L509.4,380.8 L513.1,382.5 L515.9,383.8 L513.5,386.9 L511.4,388.5 L510.7,388.7 L512.4,387.7 L515.2,386.3 L517.9,384.4 L520.3,382.2 L521.4,380.1 L523.4,380.8 L525.5,381.5 L527.5,381.8 L529.9,383.1 L531.6,384.8 L532.7,387.3 L534.7,388.3 L535.0,386.8 L533.7,385.4 L531.3,381.9 L529.9,382.6 L528.9,381.1 L527.5,381.1Z M511.1,388.4 L507.7,389.9 L504.2,390.9 L500.8,391.2 L500.8,392.1 L504.2,391.8 L507.7,390.8 L511.1,389.1 L511.1,388.4Z" fill="#5e97ec"/>
<path d="M671.0,416.6 L672.1,417.0 L671.4,417.5 L672.4,418.6 L673.8,417.6 L673.8,418.3 L674.0,419.6 L674.3,421.0 L675.2,423.2 L675.8,425.1 L676.4,426.7 L677.3,428.5 L678.8,426.1 L679.0,424.2 L679.1,422.2 L680.5,421.4 L682.3,419.7 L683.6,418.8 L684.7,418.0 L685.1,417.7 L684.9,416.0 L684.4,414.4 L685.6,414.7 L687.1,415.5 L687.5,417.2 L688.0,416.4 L688.9,415.0 L689.4,414.1 L690.7,413.4 L689.9,412.2 L688.5,412.3 L686.8,413.4 L685.4,413.1 L684.4,413.3 L683.0,413.4 L681.6,412.8 L680.3,412.0 L679.0,411.5 L678.4,410.4 L678.1,409.2 L678.2,408.2 L677.0,407.7 L675.5,407.3 L674.8,408.0 L674.7,409.2 L675.7,409.9 L675.1,410.7 L674.7,411.6 L673.4,413.4 L672.2,413.8 L672.7,415.9 L671.0,416.6Z M687.3,423.7 L688.2,423.9 L688.1,425.5 L687.3,425.8 L687.3,423.7Z" fill="#0b71ed"/>
<path d="M620.2,393.4 L625.1,392.2 L625.3,390.7 L624.2,389.7 L623.0,387.2 L622.7,384.8 L621.8,383.4 L620.7,383.4 L619.9,384.8 L620.3,387.5 L620.8,388.1 L621.9,389.1 L622.0,389.8 L620.9,390.5 L620.5,391.6 L622.0,392.0 L620.2,393.4Z M706.3,420.3 L707.9,420.3 L707.7,422.1 L709.2,424.6 L710.1,426.7 L710.8,428.4 L710.0,429.4 L708.7,427.8 L707.7,428.4 L707.8,427.0 L706.6,425.3 L706.6,423.2 L706.2,421.9 L706.3,420.3Z M699.2,431.9 L699.8,432.0 L701.5,431.0 L703.2,429.4 L704.5,428.4 L705.8,429.6 L704.6,430.3 L703.3,430.3 L702.5,432.2 L700.8,432.4 L699.2,431.9Z M692.7,428.7 L693.5,431.3 L695.0,432.3 L695.5,432.2 L694.9,430.1 L694.1,428.9 L692.7,428.7Z" fill="#aac7f2"/>
<path d="M701.8,448.7 L702.2,451.8 L702.9,455.2 L702.9,458.2 L704.9,458.8 L708.7,457.9 L712.5,456.0 L715.9,456.8 L717.6,459.0 L718.6,458.4 L720.0,461.1 L722.4,462.1 L724.3,462.3 L726.9,460.9 L729.0,454.8 L729.3,453.4 L728.9,450.9 L727.4,449.0 L726.2,447.6 L724.3,446.3 L723.7,443.6 L722.4,442.9 L721.7,440.6 L721.0,442.2 L721.0,444.7 L720.0,445.5 L718.4,444.3 L717.1,443.0 L717.8,441.6 L714.9,441.1 L713.2,442.2 L712.8,443.6 L711.4,442.9 L709.7,443.6 L708.4,444.7 L707.8,445.7 L705.6,447.2 L703.9,447.8 L701.8,448.7Z M723.2,463.8 L725.7,464.0 L725.5,466.1 L724.1,466.5 L723.2,463.8Z" fill="#bcd4f5"/>
<path d="M622.9,407.6 L622.9,409.6 L620.7,411.6 L618.1,412.7 L618.1,413.7 M629.9,406.0 L629.7,408.0 L630.6,410.0 L630.8,411.6 L631.0,415.5 L632.3,416.6 M641.2,410.4 L641.2,417.7 L649.4,417.7 M640.5,419.6 L640.5,422.3 L639.5,423.5 L639.4,424.7 M646.7,424.8 L647.6,426.0 L649.1,423.3 M626.6,425.1 L626.8,423.9 M625.9,428.9 L626.6,425.1 M629.9,430.1 L631.0,428.7 L632.3,427.4 L633.3,426.0 L634.0,424.4 M632.5,437.3 L635.1,437.3 L637.8,438.0 L639.2,440.8 L641.2,441.1 L643.3,441.7 L644.3,438.7 L644.3,436.3 L644.6,434.2 L645.0,430.7 M632.2,445.2 L637.8,445.6 L640.2,445.6 M635.4,453.7 L637.8,453.6 L637.8,450.7 L637.8,448.7 L638.5,445.7 M646.0,452.3 L645.5,449.0 L644.0,448.8 L641.4,451.4 L637.8,450.7 M645.0,439.0 L646.7,439.7 L647.7,441.1 M647.4,433.9 L651.0,436.4 M647.4,433.9 L647.4,430.1 L648.3,429.6 M652.2,430.5 L654.2,429.8 L657.0,427.7 L654.2,427.0 L653.6,425.6 M622.0,429.7 L622.2,425.6 M624.9,429.0 L624.4,425.6 M619.0,430.2 L618.4,427.8 L618.6,426.2 M632.2,435.6 L633.1,434.8 M640.5,445.7 L641.4,445.6 L642.6,444.0 L645.0,444.0 L646.7,445.0 L646.4,447.2 L645.7,448.9 M645.0,439.0 L644.0,438.0 L644.3,436.3 M651.8,440.4 L649.8,441.2 L648.1,441.2 L647.7,443.2 M649.1,423.3 L650.1,427.7 L653.2,426.0 L653.8,425.2 M641.2,429.8 L642.9,429.8 M622.9,400.1 L626.3,401.1 M618.0,401.5 L619.3,401.5 L619.0,403.7 L619.0,405.7 M625.8,392.3 L628.1,394.1 L629.7,394.7 L629.2,396.0 L628.2,397.2 L628.9,398.3 L629.2,399.8 M628.2,389.7 L628.9,391.9 L628.2,393.2 L628.1,394.1 M630.0,387.9 L630.6,388.1 L631.6,389.1 M633.8,389.2 L634.2,391.4 L634.4,392.5 M632.3,393.2 L633.6,394.8 L633.0,396.1 L631.0,396.1 L629.2,396.0 M631.3,396.8 L633.5,397.1 L633.5,398.0 M634.4,392.5 L637.0,394.1 L639.6,394.6 M640.2,389.1 L640.2,391.4 L640.5,393.0 L639.6,394.6 M640.2,389.1 L642.3,387.2 L643.4,386.7 L645.9,391.2 M645.9,391.2 L647.4,391.1 L648.8,393.2 L651.5,394.0 L650.5,396.6 M639.6,395.4 L642.3,395.4 L643.4,397.1 L644.4,398.2 M638.0,397.5 L639.5,399.4 L641.2,399.9 L643.6,399.9 M635.4,397.1 L635.7,395.6 L639.6,395.4 M635.4,397.1 L638.0,397.5 M637.3,401.3 L639.4,402.2 L641.9,402.1 M633.5,398.0 L635.1,398.4 L637.5,398.7 L638.0,397.5 M632.3,383.0 L632.5,380.1 L632.3,377.2 L634.0,374.1 L635.4,369.8 L638.1,367.0 M638.1,367.0 L641.2,367.8 L643.6,366.1 M640.5,372.8 L640.2,369.1 L638.1,367.0 M643.3,380.8 L645.7,377.5 L644.3,371.6 L644.6,369.8 L643.6,366.1 M643.3,382.2 L643.1,384.8 L643.4,386.7 M639.0,384.7 L641.6,384.6 L642.9,384.7 M638.5,386.6 L642.3,387.2 M648.8,406.1 L653.1,405.8 L654.8,405.7 M652.5,401.9 L653.9,402.3 L654.8,403.5 L654.8,405.7 M651.4,400.1 L653.9,401.0 L656.0,401.5 L657.3,401.6 M654.8,405.7 L655.6,407.6 L655.2,408.4 L656.8,410.5 L657.0,411.6 M653.1,405.8 L652.2,408.1 L650.8,409.8 L649.3,409.8 M650.8,409.8 L652.9,410.8 L654.7,412.3 L656.0,412.3 L657.0,412.2 M648.1,412.2 L649.4,410.4 L650.8,409.8 M653.4,421.7 L656.0,421.2 L659.7,419.9 L662.3,419.2 L661.8,417.2 L659.7,416.3 L659.4,416.0 M666.0,407.1 L665.5,408.8 L665.8,411.8 L666.3,413.8 L666.9,415.4 M665.8,411.8 L669.7,411.7 L671.7,410.4 L672.7,408.4 L673.1,406.3 L675.1,405.9 L675.5,405.5 M669.7,405.6 L671.0,405.7 L673.1,405.1 L675.4,405.5 M656.0,395.1 L658.4,391.9 L662.1,393.0 L665.9,392.5 L665.9,389.7 L668.6,388.4 L671.4,387.5 L674.4,389.1 L676.2,388.8 L677.5,390.8 L679.2,392.6 L681.3,392.5 L683.7,394.5 L682.3,396.6 L680.6,398.1 L679.0,401.3 L675.5,400.6 L672.7,401.3 L671.0,402.4 L669.3,400.5 L666.6,400.0 L664.2,398.1 L662.5,398.6 L662.1,402.1 M679.0,401.3 L675.5,403.0 L675.4,405.5 M662.1,402.1 L663.8,400.9 L665.5,402.2 L666.8,403.3 M669.3,400.5 L671.0,402.4 L672.7,403.3 L674.1,403.7 L675.4,405.5 M690.9,413.1 L691.6,415.5 L691.0,416.3 L692.3,417.7 L693.4,418.3 L694.1,417.4 L696.0,416.9 L698.1,418.0 M684.2,394.4 L687.1,393.0 L691.2,391.4 L694.0,391.9 L696.7,393.2 L698.4,394.3 L702.2,393.3 L704.0,393.7 L706.2,396.1 L704.6,396.9 L700.8,398.6 L700.5,400.0 L696.0,401.8 L690.5,400.8 L689.4,399.1 L686.4,398.4 L686.0,395.8 L684.2,394.4 M704.0,393.7 L706.3,390.8 L710.4,390.5 L713.2,394.6 L716.2,395.3 L713.8,398.6 L713.8,400.7 L713.6,401.2 M692.7,418.9 L693.8,420.8 L695.9,421.1 L696.4,423.2 M694.3,424.9 L695.0,423.2 L696.4,423.2 M695.7,426.0 L696.8,425.6 L697.7,423.2 M694.0,417.4 L695.3,419.6 L697.1,421.7 L697.7,423.2 M691.6,426.0 L691.9,422.4 L691.6,421.7 L691.0,420.3 L692.7,418.9 M687.3,418.5 L687.5,417.2 M710.8,405.3 L712.5,404.7 M709.2,403.3 L711.8,401.4 L713.6,401.2 M587.1,429.4 L586.8,431.6 M585.1,429.1 L585.1,431.8 M582.5,427.4 L583.0,429.6 M588.8,430.3 L586.8,431.6 L584.4,432.2 L583.0,432.5 L580.3,432.5 L578.3,432.4 L576.5,432.5 L576.1,436.1 L574.1,438.0 L574.4,440.1 L576.5,440.7 M584.4,447.0 L586.4,448.9 L586.8,451.4 L587.3,452.4 L585.7,454.0 L584.6,454.9 L587.5,457.7 M575.1,424.6 L574.4,425.6 L574.4,428.4 L577.9,428.9 L577.7,431.8 L578.3,432.4 M570.1,432.2 L572.6,433.2 L572.6,434.2 L570.3,435.9 L569.1,435.5 M572.6,433.3 L576.1,436.1 M575.9,446.0 L576.5,445.4 M577.7,449.2 L577.2,452.4 L576.1,457.2 L575.1,462.3 L574.9,466.8 L574.8,470.8 L573.8,473.4 L575.5,475.0 L577.2,475.4 M581.2,448.8 L584.4,450.5 L586.8,451.4 M560.9,423.2 L561.8,420.8 L563.0,420.8 L563.6,421.0 M562.9,423.2 L564.2,422.2 M565.5,423.5 L566.9,422.8 M565.4,425.6 L566.8,425.7 M567.3,426.6 L567.6,427.5" fill="none" stroke="#b3c8e8" stroke-width="0.45" stroke-linejoin="round"/>
<path d="M701.8,448.7 L702.2,451.8 L702.9,455.2 L702.9,458.2 L704.9,458.8 L708.7,457.9 L712.5,456.0 L715.9,456.8 L717.6,459.0 L718.6,458.4 L720.0,461.1 L722.4,462.1 L724.3,462.3 L726.9,460.9 L729.0,454.8 L729.3,453.4 L728.9,450.9 L727.4,449.0 L726.2,447.6 L724.3,446.3 L723.7,443.6 L722.4,442.9 L721.7,440.6 L721.0,442.2 L721.0,444.7 L720.0,445.5 L718.4,444.3 L717.1,443.0 L717.8,441.6 L714.9,441.1 L713.2,442.2 L712.8,443.6 L711.4,442.9 L709.7,443.6 L708.4,444.7 L707.8,445.7 L705.6,447.2 L703.9,447.8 L701.8,448.7Z" fill="url(#dots)" opacity="1"/>
<path d="M671.0,416.6 L672.1,417.0 L671.4,417.5 L672.4,418.6 L673.8,417.6 L673.8,418.3 L674.0,419.6 L674.3,421.0 L675.2,423.2 L675.8,425.1 L676.4,426.7 L677.3,428.5 L678.8,426.1 L679.0,424.2 L679.1,422.2 L680.5,421.4 L682.3,419.7 L683.6,418.8 L684.7,418.0 L685.1,417.7 L684.9,416.0 L684.4,414.4 L685.6,414.7 L687.1,415.5 L687.5,417.2 L688.0,416.4 L688.9,415.0 L689.4,414.1 L690.7,413.4 L689.9,412.2 L688.5,412.3 L686.8,413.4 L685.4,413.1 L684.4,413.3 L683.0,413.4 L681.6,412.8 L680.3,412.0 L679.0,411.5 L678.4,410.4 L678.1,409.2 L678.2,408.2 L677.0,407.7 L675.5,407.3 L674.8,408.0 L674.7,409.2 L675.7,409.9 L675.1,410.7 L674.7,411.6 L673.4,413.4 L672.2,413.8 L672.7,415.9 L671.0,416.6Z" fill="url(#dots)" opacity="0.3"/>
</svg>
<!-- /map -->
</body></html>
